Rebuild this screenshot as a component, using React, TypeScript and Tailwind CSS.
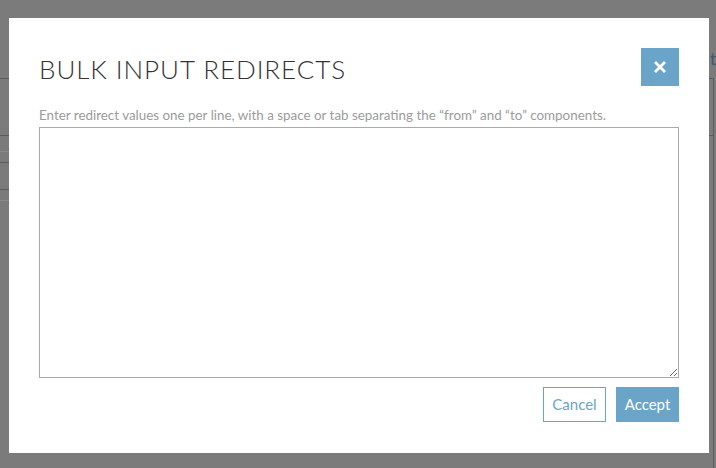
import React from "react";

const DARK = "h-px w-full bg-[#5c5c5c]";
const LIGHT = "h-px w-full bg-[#8a8a8a]";

export default function App() {
  return (
    <div
      className="flex items-start w-[716px] h-[468px] overflow-hidden bg-[#7b7b7b]"
      style={{ fontFamily: "Lato, 'Open Sans', sans-serif" }}
    >
      {/* left fragments of the page under the overlay */}
      <div className="w-[9px] shrink-0 flex flex-col pt-[78px]">
        <div className={DARK} />
        <div className={`${DARK} mt-[56px]`} />
        <div className={`${LIGHT} mt-[15px]`} />
        <div className={`${DARK} mt-[10px]`} />
        <div className={`${DARK} mt-[26px]`} />
        <div className={`${LIGHT} mt-[10px]`} />
      </div>

      {/* modal */}
      <div className="mt-[18px] w-[700px] h-[435px] shrink-0 bg-white px-[30px] pt-[30px] flex flex-col">
        <div className="flex items-center justify-between h-[38px]">
          <h1 className="text-[26px] font-light text-[#333] tracking-[0.95px] leading-none mt-[3px]">
            BULK INPUT REDIRECTS
          </h1>
          <button className="w-[38px] h-[38px] bg-[#6aa5c9] flex items-center justify-center">
            <svg width="14" height="14" viewBox="0 0 14 14">
              <path d="M2 2 L12 12 M12 2 L2 12" stroke="white" strokeWidth="2.8" />
            </svg>
          </button>
        </div>
        <p className="mt-[21px] text-[13.4px] leading-[16px] text-[#9b9b9b] whitespace-nowrap">
          Enter redirect values one per line, with a space or tab separating the “from” and “to” components.
        </p>
        <textarea className="mt-[4px] w-[640px] h-[251px] border border-[#aaaaaa] outline-none resize" />
        <div className="mt-[9px] flex justify-end gap-[10px]">
          <button className="w-[63px] h-[35px] border border-[#6aa5c9] text-[#6aa5c9] text-[15px] bg-white">
            Cancel
          </button>
          <button className="w-[63px] h-[35px] bg-[#6aa5c9] text-white text-[15px]">
            Accept
          </button>
        </div>
      </div>

      {/* right fragments of the page under the overlay */}
      <div className="w-[7px] shrink-0 flex flex-col pt-[50px] h-full">
        <div className="h-[28px] pl-[1px] text-[17px] leading-none text-[#3d5a70]">t</div>
        <div className="w-[5px] flex-1 border-t border-r border-[#5c5c5c]">
          <div className="mt-[56px] h-px w-full bg-[#5c5c5c]" />
        </div>
      </div>
    </div>
  );
}
